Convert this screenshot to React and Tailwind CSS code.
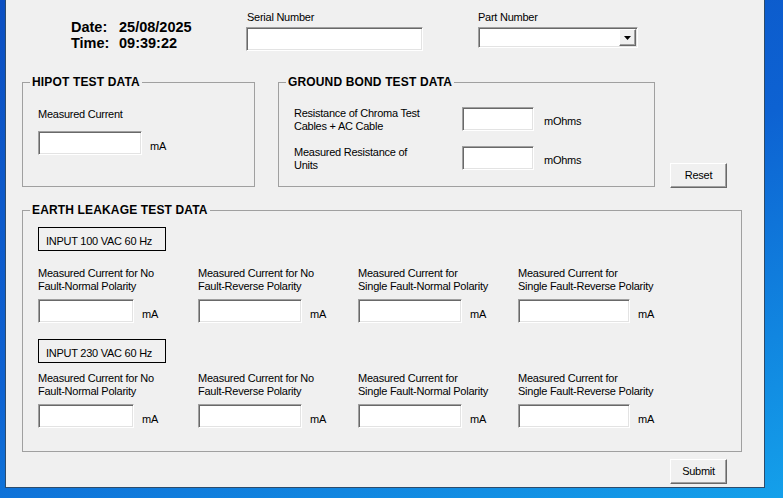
import React from "react";

const sunken =
  "bg-white border border-t-[#a0a0a0] border-l-[#a0a0a0] border-b-white border-r-white shadow-[inset_1px_1px_0_#696969,inset_-1px_-1px_0_#e3e3e3]";
const raised =
  "bg-[#f0f0f0] border border-t-white border-l-white border-b-[#696969] border-r-[#696969] shadow-[inset_-1px_-1px_0_#a0a0a0]";

function TextBox({ w }) {
  return <div className={`${sunken} h-[24px] shrink-0 ${w}`} />;
}

function Legend({ children }) {
  return (
    <legend className="ml-[7px] px-[2px] text-[12px] font-bold leading-[14px] tracking-[0.15px]">
      {children}
    </legend>
  );
}

function LeakageField({ line1, line2, w }) {
  return (
    <div className="w-[160px]">
      <div className="leading-[13px] pt-[1px]">
        {line1}
        <br />
        {line2}
      </div>
      <div className="flex items-start mt-[6px]">
        <TextBox w={w} />
        <span className="ml-[8px] mt-[9px] leading-[13px]">mA</span>
      </div>
    </div>
  );
}

function LeakageBlock({ title, first }) {
  const fields = [
    { line1: "Measured Current for No", line2: "Fault-Normal Polarity", w: "w-[96px]" },
    { line1: "Measured Current for No", line2: "Fault-Reverse Polarity", w: "w-[104px]" },
    { line1: "Measured Current for", line2: "Single Fault-Normal Polarity", w: "w-[104px]" },
    { line1: "Measured Current for", line2: "Single Fault-Reverse Polarity", w: "w-[112px]" },
  ];
  return (
    <div>
      <div className="w-[128px] h-[24px] border border-black pl-[7px] pt-[7px] leading-[13px]">
        {title}
      </div>
      <div className={`flex ${first ? "mt-[15px]" : "mt-[8px]"}`}>
        {fields.map((f, i) => (
          <LeakageField key={i} {...f} />
        ))}
      </div>
    </div>
  );
}

export default function App() {
  return (
    <div className="w-[783px] h-[498px] overflow-hidden bg-[linear-gradient(160deg,#0b4fc2_0%,#0d62d2_50%,#14a0ea_100%)] font-['Liberation_Sans',Arial,sans-serif] text-[11px] tracking-[-0.25px] text-black">
      <div className="ml-[5px] w-[760px] h-[488px] bg-[#f0f0f0] border-l border-r border-b border-[#2c4c6c] flex flex-col">
        {/* Header row */}
        <div className="flex h-[75px]">
          <div className="w-[240px] pl-[65px] pt-[19px]">
            <div className="grid grid-cols-[48px_auto] text-[14.5px] font-bold leading-[16px] tracking-normal">
              <span>Date:</span>
              <span>25/08/2025</span>
              <span>Time:</span>
              <span>09:39:22</span>
            </div>
          </div>
          <div className="w-[232px] pt-[11px]">
            <div className="leading-[13px] pl-[1px]">Serial Number</div>
            <div className={`${sunken} mt-[3px] w-[177px] h-[24px]`} />
          </div>
          <div className="pt-[11px]">
            <div className="leading-[13px]">Part Number</div>
            <div className={`${sunken} mt-[3px] w-[160px] h-[21px] flex justify-end p-[1px]`}>
              <div className={`${raised} w-[17px] h-full flex items-center justify-center`}>
                <svg width="7" height="4" viewBox="0 0 7 4">
                  <path d="M0 0h7L3.5 4z" fill="#000" />
                </svg>
              </div>
            </div>
          </div>
        </div>

        {/* Hipot / Ground bond row */}
        <div className="flex items-end pl-[16px]">
          <fieldset className="border border-[#a0a0a0] w-[233px] h-[112px]">
            <Legend>HIPOT TEST DATA</Legend>
            <div className="pt-[19px] pl-[15px]">
              <div className="leading-[13px]">Measured Current</div>
              <div className="flex items-start mt-[10px]">
                <TextBox w="w-[104px]" />
                <span className="ml-[8px] mt-[9px] leading-[13px]">mA</span>
              </div>
            </div>
          </fieldset>

          <fieldset className="ml-[23px] border border-[#a0a0a0] w-[377px] h-[112px]">
            <Legend>GROUND BOND TEST DATA</Legend>
            <div className="pt-[18px] pl-[15px] flex flex-col gap-[14px]">
              <div className="flex items-start">
                <div className="w-[168px] leading-[12.5px]">
                  Resistance of Chroma Test
                  <br />
                  Cables + AC Cable
                </div>
                <TextBox w="w-[72px]" />
                <span className="ml-[10px] mt-[8px] leading-[13px]">mOhms</span>
              </div>
              <div className="flex items-start">
                <div className="w-[168px] leading-[12.5px]">
                  Measured Resistance of
                  <br />
                  Units
                </div>
                <TextBox w="w-[72px]" />
                <span className="ml-[10px] mt-[8px] leading-[13px]">mOhms</span>
              </div>
            </div>
          </fieldset>

          <button className={`${raised} ml-[15px] w-[57px] h-[25px] mb-[-1px] leading-[13px]`}>
            Reset
          </button>
        </div>

        {/* Earth leakage */}
        <fieldset className="mt-[16px] ml-[16px] border border-[#a0a0a0] w-[720px]">
          <Legend>EARTH LEAKAGE TEST DATA</Legend>
          <div className="pt-[10px] pl-[15px] pb-[23px] flex flex-col gap-[16px]">
            <LeakageBlock title="INPUT 100 VAC 60 Hz" first />
            <LeakageBlock title="INPUT 230 VAC 60 Hz" />
          </div>
        </fieldset>

        <div className="mt-[7px] flex justify-end pr-[37px]">
          <button className={`${raised} w-[57px] h-[25px] leading-[13px]`}>Submit</button>
        </div>
      </div>
    </div>
  );
}
